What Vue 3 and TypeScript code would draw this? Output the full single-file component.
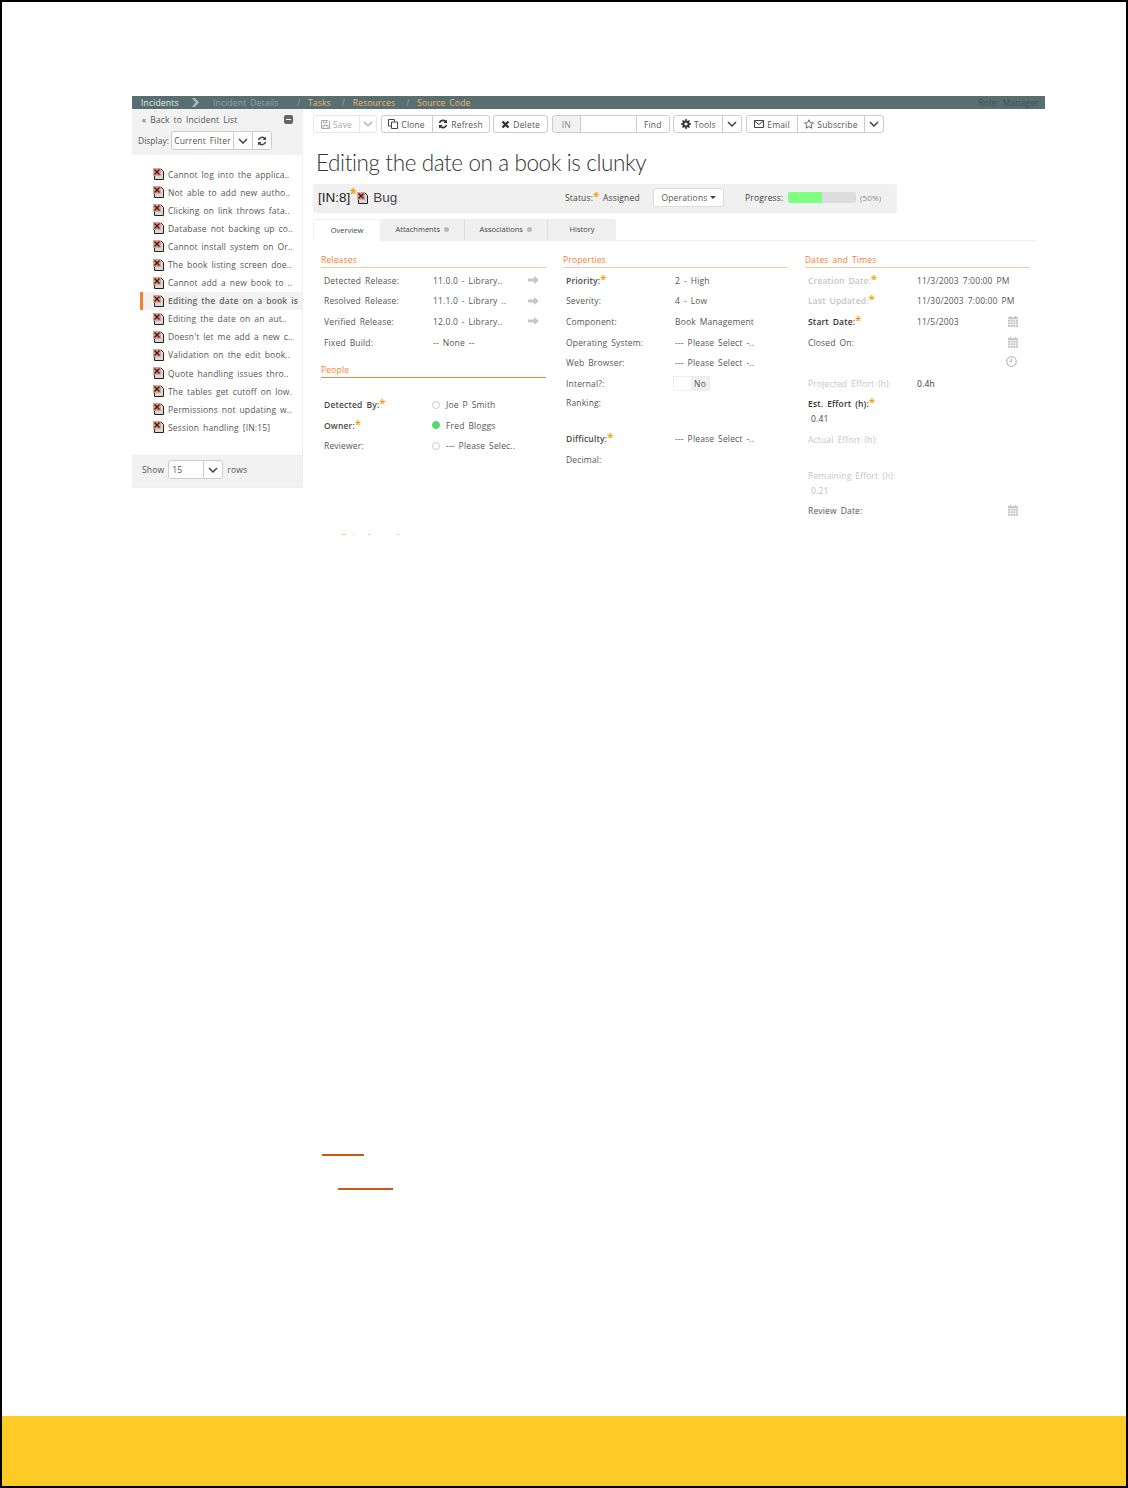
<script setup lang="ts">
const incidents = [
  'Cannot log into the applica..',
  'Not able to add new autho..',
  'Clicking on link throws fata..',
  'Database not backing up co..',
  'Cannot install system on Or..',
  'The book listing screen doe..',
  'Cannot add a new book to ..',
  'Editing the date on a book is c',
  'Editing the date on an aut..',
  "Doesn't let me add a new c..",
  'Validation on the edit book..',
  'Quote handling issues thro..',
  'The tables get cutoff on low.',
  'Permissions not updating w..',
  'Session handling [IN:15]',
]
const releases = [
  { label: 'Detected Release:', value: '11.0.0 - Library..', arrow: true },
  { label: 'Resolved Release:', value: '11.1.0 - Library ..', arrow: true },
  { label: 'Verified Release:', value: '12.0.0 - Library..', arrow: true },
  { label: 'Fixed Build:', value: '-- None --', arrow: false },
]
const people = [
  { label: 'Detected By:', req: true, value: 'Joe P Smith', on: false },
  { label: 'Owner:', req: true, value: 'Fred Bloggs', on: true },
  { label: 'Reviewer:', req: false, value: '--- Please Selec..', on: false },
]
</script>

<template>
  <div class="page">
    <main class="content">
      <nav class="topbar">
        <span class="crumb white">Incidents</span>
        <svg class="chev" width="9" height="9" viewBox="0 0 9 9"><path d="M1 0h3l4 4.500-4 4.500H1l3.500-4.500z" fill="#a9b7b8" /></svg>
        <span class="crumb dim">Incident Details</span>
        <span class="sep">/</span><span class="crumb link">Tasks</span>
        <span class="sep">/</span><span class="crumb link">Resources</span>
        <span class="sep">/</span><span class="crumb link">Source Code</span>
        <span class="role">Role: Manager</span>
      </nav>
      <div class="body">
        <aside class="side">
          <div class="side-head">
            <div class="back-row"><span>« Back to Incident List</span><span class="collapse"><i></i></span></div>
            <div class="display-row">
              <span class="display-label">Display:</span>
              <div class="btn-group small">
                <span class="cell filter">Current Filter</span>
                <span class="cell caret w19"><svg width="10" height="6" viewBox="0 0 10 6"><path d="M1 1l4 4 4-4" fill="none" stroke="#444" stroke-width="1.500" /></svg></span>
                <span class="cell caret w19"><svg width="10" height="10" viewBox="0 0 10 10"><path d="M1.500 4A3.600 3.600 0 0 1 8 3M8.500 6A3.600 3.600 0 0 1 2 7" fill="none" stroke="#444" stroke-width="1.500" /><path d="M9 .5v3.500H5.500zM1 9.500V6h3.500z" fill="#444" /></svg></span>
              </div>
            </div>
          </div>
          <ul class="list">
            <li v-for="(item, i) in incidents" :key="item" :class="{ active: i === 7 }">
              <svg class="doc" width="11" height="12" viewBox="0 0 11 12"><path d="M1.500 1h6.500l2.500 2.500v8H1.500z" fill="#d8d8d8" stroke="#222" /><rect x="0" y="0" width="8" height="8" fill="#d9a094" /><path d="M1.500 1.500l5 5m0-5l-5 5" stroke="#4a140c" stroke-width="1.400" /></svg>
              <span>{{ item }}</span>
            </li>
          </ul>
          <div class="side-foot">
            <span>Show</span>
            <div class="btn-group small">
              <span class="cell rows">15</span>
              <span class="cell caret w19"><svg width="10" height="6" viewBox="0 0 10 6"><path d="M1 1l4 4 4-4" fill="none" stroke="#444" stroke-width="1.500" /></svg></span>
            </div>
            <span>rows</span>
          </div>
        </aside>
        <section class="main">
          <div class="toolbar">
            <div class="btn-group muted">
              <span class="cell w45"><svg class="ic" width="9" height="9" viewBox="0 0 9 9"><path d="M.5.500h6.500l1.500 1.500v6.500h-8z" fill="none" stroke="#aaa" /><path d="M2.500 1v2h3V1M2 8.500V5.500h5v3" fill="none" stroke="#aaa" /></svg>Save</span>
              <span class="cell caret w17"><svg width="10" height="6" viewBox="0 0 10 6"><path d="M1 1l4 4 4-4" fill="none" stroke="#aaa" stroke-width="1.200" /></svg></span>
            </div>
            <div class="btn-group">
              <span class="cell w50"><svg class="ic" width="10" height="10" viewBox="0 0 10 10"><path d="M.5.500h6v2M3.500 3h6v6.500h-6zM.5.500v6.500h3" fill="none" stroke="#444" /></svg>Clone</span>
              <span class="cell w57"><svg class="ic" width="10" height="10" viewBox="0 0 10 10"><path d="M1.500 4A3.600 3.600 0 0 1 8 3M8.500 6A3.600 3.600 0 0 1 2 7" fill="none" stroke="#333" stroke-width="1.600" /><path d="M9 .5v3.500H5.500zM1 9.500V6h3.500z" fill="#333" /></svg>Refresh</span>
            </div>
            <div class="btn-group">
              <span class="cell w53"><svg class="ic" width="9" height="9" viewBox="0 0 9 9"><path d="M1.500 1.500l6 6m0-6l-6 6" stroke="#333" stroke-width="2.400" /></svg>Delete</span>
            </div>
            <div class="btn-group find">
              <span class="cell in">IN</span>
              <span class="cell blank"></span>
              <span class="cell w33">Find</span>
            </div>
            <div class="btn-group">
              <span class="cell w48"><svg class="ic" width="10" height="10" viewBox="0 0 10 10"><circle cx="5" cy="5" r="2.600" fill="none" stroke="#333" stroke-width="2" /><path d="M5 0v2M5 8v2M0 5h2M8 5h2M1.500 1.500l1.400 1.400M7.100 7.100l1.400 1.400M8.500 1.500L7.100 2.900M2.900 7.100L1.500 8.500" stroke="#333" stroke-width="1.500" /></svg>Tools</span>
              <span class="cell caret w19"><svg width="10" height="6" viewBox="0 0 10 6"><path d="M1 1l4 4 4-4" fill="none" stroke="#444" stroke-width="1.500" /></svg></span>
            </div>
            <div class="btn-group">
              <span class="cell w50"><svg class="ic" width="10" height="8" viewBox="0 0 10 8"><path d="M.5.500h9v7h-9zM.5 1l4.500 3.500L9.500 1" fill="none" stroke="#444" /></svg>Email</span>
              <span class="cell w67"><svg class="ic" width="10" height="10" viewBox="0 0 10 10"><path d="M5 .8l1.300 2.900 3.100.3-2.300 2.100.7 3.100L5 7.600 2.200 9.200l.7-3.100L.6 4l3.100-.3z" fill="none" stroke="#555" stroke-width=".9" /></svg>Subscribe</span>
              <span class="cell caret w19"><svg width="10" height="6" viewBox="0 0 10 6"><path d="M1 1l4 4 4-4" fill="none" stroke="#444" stroke-width="1.500" /></svg></span>
            </div>
          </div>
          <h1>Editing the date on a book is clunky</h1>
          <div class="status-bar">
            <div class="type"><b>[IN:8]</b><em>*</em>
              <svg class="doc" width="11" height="12" viewBox="0 0 11 12"><path d="M1.500 1h6.500l2.500 2.500v8H1.500z" fill="#d8d8d8" stroke="#222" /><rect x="0" y="0" width="8" height="8" fill="#d9a094" /><path d="M1.500 1.500l5 5m0-5l-5 5" stroke="#4a140c" stroke-width="1.400" /></svg>
              <span>Bug</span></div>
            <div class="status"><span class="status-label">Status:<em>*</em></span><span>Assigned</span></div>
            <span class="ops">Operations<i></i></span>
            <div class="progress"><span class="progress-label">Progress:</span><div class="track"><div class="fill" style="width: 50%"></div></div><small>(50%)</small></div>
          </div>
          <div class="tabs">
            <span class="tab active">Overview</span>
            <span class="tab">Attachments <i></i></span>
            <span class="tab">Associations <i></i></span>
            <span class="tab">History</span>
          </div>
          <div class="columns">
            <div class="col">
              <h2>Releases</h2>
              <div v-for="r in releases" :key="r.label" class="row">
                <label>{{ r.label }}</label><span class="val">{{ r.value }}</span>
                <svg v-if="r.arrow" class="arrow" width="11" height="8" viewBox="0 0 11 8"><path d="M0 2.500h6V0l5 4-5 4V5.500H0z" fill="#c6c6c6" /></svg>
              </div>
              <h2 class="people">People</h2>
              <div class="people-rows">
                <div v-for="p in people" :key="p.label" class="row">
                  <label :class="{ strong: p.req }">{{ p.label }}<em v-if="p.req">*</em></label>
                  <i class="dot" :class="{ on: p.on }"></i><span>{{ p.value }}</span>
                </div>
              </div>
            </div>
            <div class="col">
              <h2>Properties</h2>
              <div class="row"><label class="strong">Priority:<em>*</em></label><span>2 - High</span></div>
              <div class="row"><label>Severity:</label><span>4 - Low</span></div>
              <div class="row"><label>Component:</label><span>Book Management</span></div>
              <div class="row"><label>Operating System:</label><span>--- Please Select -..</span></div>
              <div class="row"><label>Web Browser:</label><span>--- Please Select -..</span></div>
              <div class="row"><label>Internal?:</label><span class="toggle"><i></i><b>No</b></span></div>
              <div class="row ranking"><label>Ranking:</label></div>
              <div class="row diff"><label class="strong">Difficulty:<em>*</em></label><span>--- Please Select -..</span></div>
              <div class="row"><label>Decimal:</label></div>
            </div>
            <div class="col">
              <h2>Dates and Times</h2>
              <div class="row"><label class="off strong">Creation Date:<em>*</em></label><span>11/3/2003 7:00:00 PM</span></div>
              <div class="row"><label class="off strong">Last Updated:<em>*</em></label><span>11/30/2003 7:00:00 PM</span></div>
              <div class="row"><label class="strong dark">Start Date:<em>*</em></label><span>11/5/2003</span>
                <svg class="cal" width="10" height="11" viewBox="0 0 10 11"><rect y="1" width="10" height="10" fill="#c9c9c9" /><path d="M2.500 0v2M7.500 0v2" stroke="#bbb" /><path d="M0 3.500h10M2.500 4v7M5 4v7M7.500 4v7M0 6h10M0 8.500h10" stroke="#f2f2f2" stroke-width=".7" /></svg></div>
              <div class="row"><label>Closed On:</label>
                <svg class="cal" width="10" height="11" viewBox="0 0 10 11"><rect y="1" width="10" height="10" fill="#c9c9c9" /><path d="M2.500 0v2M7.500 0v2" stroke="#bbb" /><path d="M0 3.500h10M2.500 4v7M5 4v7M7.500 4v7M0 6h10M0 8.500h10" stroke="#f2f2f2" stroke-width=".7" /></svg></div>
              <div class="clock-row"><svg width="11" height="11" viewBox="0 0 11 11"><circle cx="5.500" cy="5.500" r="4.800" fill="none" stroke="#bbb" stroke-width="1.200" /><path d="M5.500 2.500v3.200H3" fill="none" stroke="#bbb" stroke-width="1.100" /></svg></div>
              <div class="row effort"><label class="off">Projected Effort (h):</label><span class="dk">0.4h</span></div>
              <div class="stack est"><label class="strong dark">Est. Effort (h):<em>*</em></label><span class="num">0.41</span></div>
              <div class="stack actual"><label class="off">Actual Effort (h):</label></div>
              <div class="stack remain"><label class="off">Remaining Effort (h):</label><span class="num off">0.21</span></div>
              <div class="row review"><label>Review Date:</label>
                <svg class="cal" width="10" height="11" viewBox="0 0 10 11"><rect y="1" width="10" height="10" fill="#c9c9c9" /><path d="M2.500 0v2M7.500 0v2" stroke="#bbb" /><path d="M0 3.500h10M2.500 4v7M5 4v7M7.500 4v7M0 6h10M0 8.500h10" stroke="#f2f2f2" stroke-width=".7" /></svg></div>
            </div>
          </div>
        </section>
      </div>
      <div class="specks"><i class="s1"></i><i class="s2"></i><i class="s3"></i><i class="s4"></i></div>
      <div class="rules">
        <i class="rule one"></i>
        <i class="rule two"></i>
      </div>
    </main>
    <footer class="band"></footer>
  </div>
</template>

<style scoped>
.page {
  box-sizing: border-box;
  width: 1128px;
  height: 1488px;
  border: 2px solid #000;
  display: flex;
  flex-direction: column;
  background: #fff;
  font-family: "Open Sans", sans-serif;
  font-size: 8.5px;
  letter-spacing: .17px;
  word-spacing: 1.5px;
  color: #555;
}
.content { flex: 1; padding: 94px 81px 0 130px; min-height: 0; }
.band { height: 70px; background: #fdca26; }
em { color: #f7a30a; font-style: normal; font-weight: 700; font-size: 11px; line-height: 0; position: relative; top: -1px; letter-spacing: 0; }
.topbar {
  height: 13px;
  background: #586f72;
  display: flex;
  align-items: center;
  padding: 0 6px 1px 9px;
  box-sizing: border-box;
  color: #fff;
  white-space: nowrap;
}
.crumb.white { color: #e6ecec; width: 39px; }
.crumb.dim { color: #8fa2a3; margin-left: 13px; width: 73px; }
.crumb.link { color: #f6b26b; }
.chev { margin-left: 11px; }
.sep { color: #8fa2a3; margin: 0 8px 0 11px; width: 3px; }
.role { margin-left: auto; color: #3f5254; }
.body { display: flex; align-items: flex-start; height: 424px; }
.side { width: 171px; flex: none; }
.side-head { background: #f2f2f2; height: 46px; padding: 0 6px; box-sizing: border-box; }
.back-row { display: flex; justify-content: space-between; align-items: center; padding: 5px 4px 0 4px; height: 16px; box-sizing: border-box; }
.collapse { width: 9px; height: 9px; background: #666; border-radius: 2px; display: flex; align-items: center; justify-content: center; }
.collapse i { width: 5px; height: 1px; background: #fff; display: block; }
.display-row { display: flex; align-items: center; margin-top: 6px; }
.display-label { width: 33px; flex: none; letter-spacing: 0; word-spacing: 0; }
.btn-group { display: inline-flex; height: 18px; border: 1px solid #ccc; border-radius: 3px; background: #fff; box-sizing: border-box; color: #555; }
.btn-group.small { height: 19px; }
.cell { display: flex; align-items: center; justify-content: center; padding: 0 2px; border-left: 1px solid #ccc; white-space: nowrap; box-sizing: border-box; }
.cell:first-child { border-left: 0; }
.cell.filter { width: 61px; padding: 0; }
.w17 { width: 17px; }
.w19 { width: 19px; }
.w33 { width: 33px; }
.w45 { width: 45px; }
.w48 { width: 48px; }
.w50 { width: 50px; }
.w53 { width: 53px; }
.w57 { width: 57px; }
.w67 { width: 67px; }
.cell.rows { width: 34px; padding: 0 3px; justify-content: flex-start; letter-spacing: 0; }
.ic { margin-right: 3px; }
.list { list-style: none; margin: 0; padding: 10px 0 0 8px; height: 300px; box-sizing: border-box; border-right: 1px solid #eee; overflow: hidden; }
.list li { height: 18.100px; display: flex; align-items: center; white-space: nowrap; padding-left: 10px; overflow: hidden; border-left: 3px solid transparent; box-sizing: border-box; }
.list li .doc { margin-right: 4px; flex: none; }
.list li.active { background: #f2f2f2; border-left-color: #f58233; font-weight: 600; color: #666; }
.side-foot { height: 33px; background: #f2f2f2; border: 1px solid #eee; border-width: 1px 1px 1px 0; display: flex; align-items: center; gap: 4px; padding: 0 0 4px 10px; box-sizing: border-box; }
.main { flex: 1; padding: 6px 8px 0 10px; min-width: 0; }
.toolbar { display: flex; gap: 3.600px; height: 18px; }
.toolbar .muted { color: #aaa; border-color: #e6e6e6; }
.toolbar .muted .cell { border-color: #e6e6e6; }
.find .in { width: 27px; background: #f2f2f2; color: #888; border-radius: 3px 0 0 3px; }
.find .blank { width: 56px; padding: 0; }
h1 { margin: 15px 0 0 3px; height: 29px; font: 300 22.500px/29px Lato, sans-serif; letter-spacing: -.4px; word-spacing: 0; color: #333; white-space: nowrap; }
.status-bar { margin-top: 7px; width: 584px; height: 29px; background: #f0f0f0; border-radius: 3px; display: flex; align-items: center; padding: 0 0 2px 5px; box-sizing: border-box; }
.type { display: flex; align-items: center; font-size: 13.500px; letter-spacing: 0; word-spacing: 0; color: #444; width: 247px; flex: none; font-family: "Liberation Sans", sans-serif; }
.type b { font-weight: 400; color: #222; }
.type em { font-size: 16px; width: 6px; top: -3px; }
.type .doc { margin: 0 5px 0 1px; }
.status { display: flex; width: 88px; flex: none; color: #444; }
.status-label { width: 38px; flex: none; }
.ops { background: #fff; border: 1px solid #ddd; border-radius: 2px; height: 19px; width: 71px; flex: none; justify-content: center; display: flex; align-items: center; box-sizing: border-box; }
.ops i { border: 3px solid transparent; border-top-color: #444; border-bottom: 0; margin-left: 2px; }
.progress { display: flex; align-items: center; margin-left: 21px; color: #444; }
.progress-label { width: 43px; flex: none; }
.track { width: 68px; height: 11px; background: #ddd; border-radius: 2px; overflow: hidden; }
.fill { height: 100%; background: #80ff80; }
.progress small { font-size: 8px; margin-left: 4px; color: #888; }
.tabs { margin-top: 6px; height: 21px; display: flex; border-bottom: 1px solid #eee; font-size: 7.500px; letter-spacing: 0; word-spacing: 0; width: 723px; }
.tab { height: 21px; padding-bottom: 1px; background: #f0f0f0; display: flex; align-items: center; justify-content: center; width: 83.500px; border-right: 1px solid #ddd; box-sizing: border-box; color: #444; }
.tab:first-child { width: 68px; }
.tab:last-child { width: 68px; border-radius: 0 3px 0 0; border-right: 0; }
.tab.active { background: #fff; border: 1px solid #eee; border-bottom: 0; height: 22px; padding-bottom: 2px; border-radius: 3px 3px 0 0; }
.tab i { width: 5px; height: 5px; background: #bbb; border-radius: 50%; margin-left: 4px; }
.columns { display: flex; gap: 17px; margin: 13px 0 0 8px; }
.col { width: 225px; flex: none; }
h2 { margin: 0; font-size: 8.500px; font-weight: 400; color: #f58233; height: 13px; line-height: 11px; border-bottom: 1px solid #f6c79f; }
h2.people { margin-top: 12px; border-bottom-color: #f0843c; }
.row { display: flex; align-items: center; height: 20.600px; padding-left: 3px; position: relative; white-space: nowrap; color: #555; }
.col > h2 + .row { margin-top: 2px; }
label { width: 109px; flex: none; color: #555; }
.arrow { position: absolute; right: 7px; top: 6px; }
.people-rows { margin-top: 16px; }
label.strong { font-weight: 600; color: #4a4a4a; }
label.off, label.off.strong { color: #c5c5c5; }
label.dark, label.dark.strong { color: #333; }
.dot { width: 8px; height: 8px; border: 1px solid #ccc; box-sizing: border-box; border-radius: 50%; margin: 0 6px 0 -1px; }
.dot.on { background: #4ddb6a; border-color: #4ddb6a; }
.toggle { display: flex; width: 37px; height: 15px; border: 1px solid #eee; box-sizing: border-box; margin-left: -2px; }
.toggle i { flex: 1; }
.toggle b { width: 18px; background: #f0f0f0; font-weight: 400; text-align: center; line-height: 13px; }
.ranking { height: 18px; }
.diff { margin-top: 17px; }
.cal { position: absolute; right: 12px; top: 5px; }
.clock-row { height: 17px; display: flex; align-items: center; justify-content: flex-end; padding: 2px 13px 0 0; box-sizing: border-box; }
.effort { margin-top: 4px; }
.stack { display: flex; flex-direction: column; padding-left: 3px; }
.stack .num { margin: 4px 0 0 3px; color: #444; }
.stack .num.off { color: #bbb; }
.est { margin-top: 4px; }
.actual { margin-top: 10px; }
.remain { margin-top: 25px; }
.review { margin-top: 4px; }
.dk { color: #333; }
.specks { display: flex; height: 1px; margin: 1px 0 0 209px; }
.specks i { display: block; height: 1px; background: #f9c9a0; }
.s1 { width: 5px; }
.s2 { width: 1px; margin-left: 8px; }
.s3 { width: 3px; margin-left: 13px; }
.s4 { width: 2px; margin-left: 26px; }
.rules { padding-top: 619px; }
.rule { display: block; height: 2px; background: #c55a11; }
.rule.one { margin-left: 190px; width: 42px; }
.rule.two { margin: 32px 0 0 206px; width: 55px; }
</style>
